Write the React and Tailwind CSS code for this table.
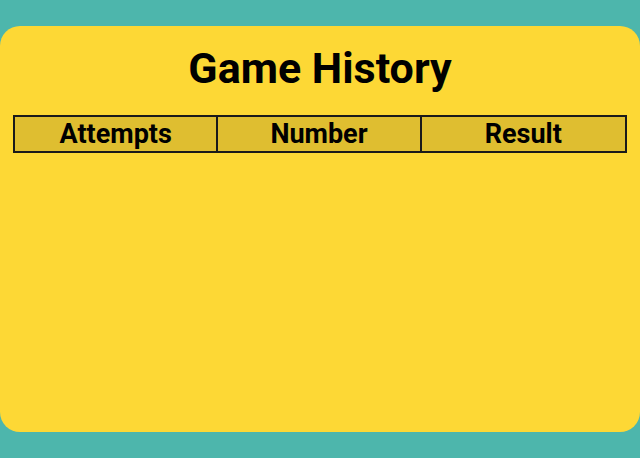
export default function App() {
  return (
    <div className="w-[640px] h-[458px] bg-[#4db6ac] py-[26px]" style={{ fontFamily: "Roboto, 'Liberation Sans', sans-serif" }}>
      <div className="h-full bg-[#fdd835] rounded-[20px] px-[13px] pt-[16px] flex flex-col">
        <h1 className="text-[43px] leading-[52px] font-bold text-black text-center">Game History</h1>
        <div className="mt-[21px] border-2 border-[#1a1a1a] grid grid-cols-3 bg-[#dfbe30]">
          <div className="h-[34px] flex items-center justify-center text-[27px] font-bold text-black border-r-2 border-[#1a1a1a]">Attempts</div>
          <div className="h-[34px] flex items-center justify-center text-[27px] font-bold text-black border-r-2 border-[#1a1a1a]">Number</div>
          <div className="h-[34px] flex items-center justify-center text-[27px] font-bold text-black">Result</div>
        </div>
      </div>
    </div>
  );
}
